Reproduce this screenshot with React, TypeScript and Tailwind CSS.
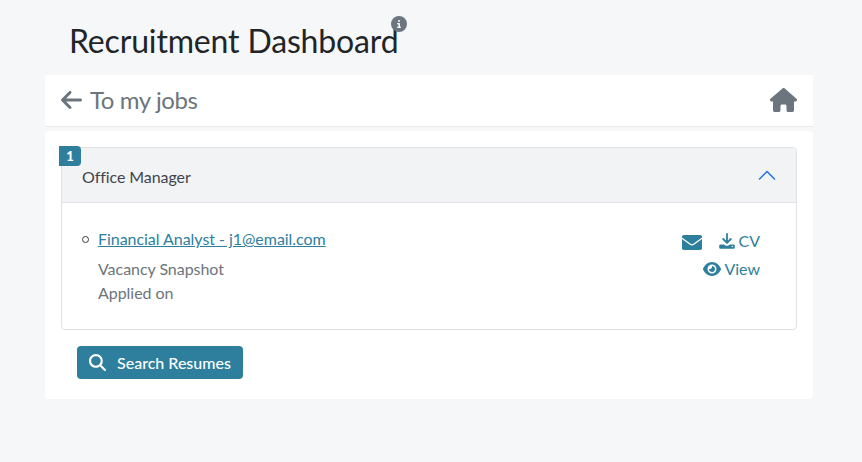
import React from "react";
import { FaArrowLeft, FaHouse, FaCircleInfo, FaEye, FaMagnifyingGlass } from "react-icons/fa6";

function DownloadIcon() {
  return (
    <svg className="h-4 w-4" viewBox="0 0 16 16" fill="none" stroke="currentColor" strokeLinecap="round" strokeLinejoin="round">
      <path d="M8 1v8.500M4.200 6 8 9.800 11.800 6" strokeWidth="1.800" />
      <path d="M1.500 11.500h3.400L7 12.700h2l2.100-1.200h3.400a1.300 1.300 0 0 1 1.300 1.300v1.600a1.300 1.300 0 0 1-1.300 1.300h-13a1.300 1.300 0 0 1-1.300-1.300v-1.600a1.300 1.300 0 0 1 1.300-1.300z" fill="currentColor" stroke="none" />
      <circle cx="13.300" cy="13.500" r="0.700" fill="white" stroke="none" />
    </svg>
  );
}

function EnvelopeIcon() {
  return (
    <svg className="mt-[3px] mr-[17px] h-[15px] w-5" viewBox="0 0 20 15">
      <rect width="20" height="15" rx="1.800" fill="currentColor" />
      <path d="M0 3.300 8.300 9.300Q10 10.500 11.700 9.300L20 3.300" fill="none" stroke="white" strokeWidth="1.300" />
    </svg>
  );
}

export default function App() {
  return (
    <div className="min-h-[462px] bg-[#f5f7f9] pl-[45px] pr-[49px] font-[Lato,sans-serif] text-base text-[#212529]">
      <header className="flex h-[75px] items-start pl-6 pt-[21px]">
        <h1 className="relative text-[32px] leading-10 tracking-[-0.16px] whitespace-nowrap">
          Recruitment Dashboard
          <FaCircleInfo className="absolute -top-[5px] -right-[9px] size-4 text-[#6c757d]" />
        </h1>
      </header>
      <nav className="flex h-[52px] items-center justify-between border-b border-[#e9ebed] bg-white px-4 pb-px text-2xl text-[#6c757d]">
        <a className="flex items-center gap-2">
          <FaArrowLeft className="h-6 w-[21px]" />
          <span className="tracking-[-0.4px]">To my jobs</span>
        </a>
        <FaHouse className="h-6 w-[27px]" />
      </nav>
      <main className="mt-1 h-[268px] rounded-[4px] bg-white px-4 pt-4">
        <section className="relative h-[183px] rounded-[4px] border border-[#dfe1e4]">
          <span className="absolute -left-[3px] -top-[2px] flex h-5 w-[22px] items-center justify-center rounded-r-[4px] bg-[#2d7f9d] pt-px text-[13px] font-black text-white">1</span>
          <div className="flex h-[55px] items-center justify-between rounded-t-[3px] border-b border-[#dfe1e4] bg-[#f2f3f5] pl-5 pr-5 pt-1">
            <h2 className="tracking-[-0.08px] text-[#3f454b]">Office Manager</h2>
            <svg className="h-4 w-[18px]" viewBox="0 0 18 16" fill="none" stroke="#2372df" strokeWidth="1.500" strokeLinecap="round" strokeLinejoin="round">
              <path d="M1.500 10 9 2.500l7.500 7.500" />
            </svg>
          </div>
          <div className="flex justify-between pl-5 pr-9 pt-6">
            <div className="flex gap-[9px]">
              <span className="mt-[9px] size-[7px] rounded-full border border-[#343a40]" />
              <div className="tracking-[-0.04px] text-[#6c757d]">
                <a className="block text-[#2d7f9d] underline">Financial Analyst - j1@email.com</a>
                <p className="mt-1.5">Vacancy Snapshot</p>
                <p>Applied on</p>
              </div>
            </div>
            <div className="flex flex-col items-end gap-1 pt-0.5 text-[#2d7f9d]">
              <div className="flex h-6 items-center">
                <EnvelopeIcon />
                <DownloadIcon />
                <span className="ml-[3px]">CV</span>
              </div>
              <div className="flex h-6 items-center gap-[3px]">
                <FaEye className="h-4 w-[18px]" />
                <span>View</span>
              </div>
            </div>
          </div>
        </section>
        <button className="mt-4 ml-4 flex h-[33px] w-[166px] items-center rounded-[4px] bg-[#2d7f9d] pl-3 text-base font-medium text-white">
          <FaMagnifyingGlass className="mr-[11px] size-[17px]" />
          Search Resumes
        </button>
      </main>
    </div>
  );
}
